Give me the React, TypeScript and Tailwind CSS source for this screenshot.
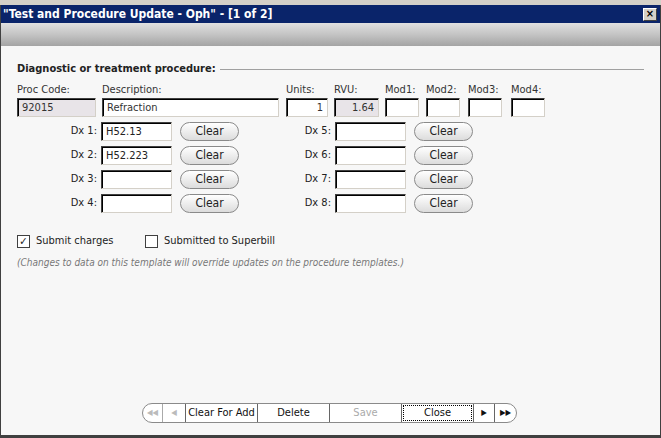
import React from 'react';

const font = { fontFamily: '"DejaVu Sans Condensed", "Liberation Sans", sans-serif' };

function Box({ w, value = '', gray = false, right = false }: { w: string; value?: string; gray?: boolean; right?: boolean }) {
  return (
    <div
      className={`${w} h-[19px] border border-t-[#404040] border-l-[#404040] border-b-[#d4d0c8] border-r-[#d4d0c8] shadow-[inset_1px_1px_0_#000] px-[4px] text-[11px] leading-[17px] ${gray ? 'bg-[#e8e4e8]' : 'bg-white'} ${right ? 'text-right' : ''}`}
    >
      {value}
    </div>
  );
}

function ClearBtn() {
  return (
    <button className="w-[59px] h-[19px] rounded-full border border-[#8a8a8a] bg-gradient-to-b from-white to-[#dcdcdc] text-[12px] leading-[17px] text-[#222]">
      Clear
    </button>
  );
}

function DxRow({ n, value }: { n: number; value?: string }) {
  return (
    <div className="flex items-center">
      <span className="w-[85px] text-right pr-[4px] text-[11px] text-[#222]">Dx {n}:</span>
      <Box w="w-[71px]" value={value} />
      <span className="w-[8px]" />
      <ClearBtn />
    </div>
  );
}

export default function App() {
  return (
    <div style={font} className="w-[661px] h-[438px] bg-[#d4d0c8] flex flex-col pt-[5px] overflow-hidden">
      <div className="flex-1 flex flex-col border-x border-[#404040] bg-[#f7f7f7]">
        <div className="h-[18px] bg-[#0a246a] flex items-center justify-between pl-[2px] pr-[3px]">
          <span className="text-white text-[12px] font-bold">"Test and Procedure Update - Oph" - [1 of 2]</span>
          <span className="w-[14px] h-[13px] bg-[#d4d0c8] border border-t-white border-l-white border-b-[#404040] border-r-[#404040] text-[11px] leading-[10px] text-center font-bold">×</span>
        </div>
        <div className="h-[23px] bg-gradient-to-b from-[#e0e0e0] via-[#c4c4c4] to-[#a4a4a4]" />
        <div className="flex-1 px-[16px] pt-[15px] text-[#222]">
          <div className="flex items-center gap-[4px]">
            <span className="text-[11px] font-bold">Diagnostic or treatment procedure:</span>
            <div className="flex-1 h-px bg-[#a0a0a0]" />
          </div>
          <div className="flex mt-[4px] text-[11px] text-[#333]">
            <div className="w-[85px]"><div>Proc Code:</div><Box w="w-[79px]" value="92015" gray /></div>
            <div className="w-[184px]"><div>Description:</div><Box w="w-[177px]" value="Refraction" /></div>
            <div className="w-[48px]"><div>Units:</div><Box w="w-[42px]" value="1" right /></div>
            <div className="w-[51px]"><div>RVU:</div><Box w="w-[45px]" value="1.64" gray right /></div>
            <div className="w-[41px]"><div>Mod1:</div><Box w="w-[34px]" /></div>
            <div className="w-[42px]"><div>Mod2:</div><Box w="w-[34px]" /></div>
            <div className="w-[43px]"><div>Mod3:</div><Box w="w-[34px]" /></div>
            <div><div>Mod4:</div><Box w="w-[34px]" /></div>
          </div>
          <div className="flex mt-[5px] -ml-[1px]">
            <div className="flex flex-col gap-[5px] w-[234px]">
              <DxRow n={1} value="H52.13" />
              <DxRow n={2} value="H52.223" />
              <DxRow n={3} />
              <DxRow n={4} />
            </div>
            <div className="flex flex-col gap-[5px]">
              <DxRow n={5} />
              <DxRow n={6} />
              <DxRow n={7} />
              <DxRow n={8} />
            </div>
          </div>
          <div className="flex items-center mt-[20px] text-[11px]">
            <span className="w-[13px] h-[13px] bg-white border border-[#404040] text-[11px] leading-[11px] text-center font-bold">✓</span>
            <span className="ml-[6px] w-[109px]">Submit charges</span>
            <span className="w-[13px] h-[13px] bg-white border border-[#404040]" />
            <span className="ml-[6px]">Submitted to Superbill</span>
          </div>
          <div className="mt-[5px] text-[10px] italic text-[#777]">(Changes to data on this template will override updates on the procedure templates.)</div>
        </div>
        <div className="flex justify-center pb-[12px]">
          <div className="flex h-[20px] border border-[#8a8a8a] rounded-full overflow-hidden bg-white text-[11px] text-[#111] mr-[143px] ml-[141px]">
            <div className="w-[20px] flex items-center justify-center text-[#bbb] text-[8px] border-r border-[#aaa]">◀◀</div>
            <div className="w-[23px] flex items-center justify-center text-[#bbb] text-[8px] border-r border-[#666]">◀</div>
            <div className="w-[72px] flex items-center justify-center border-r border-[#666]">Clear For Add</div>
            <div className="w-[72px] flex items-center justify-center border-r border-[#666]">Delete</div>
            <div className="w-[72px] flex items-center justify-center border-r border-[#666] text-[#aaa]">Save</div>
            <div className="w-[72px] flex items-center justify-center border-r border-[#666]"><span className="border border-dotted border-black px-[20px] leading-[14px]">Close</span></div>
            <div className="w-[21px] flex items-center justify-center text-[8px] border-r border-[#666]">▶</div>
            <div className="w-[21px] flex items-center justify-center text-[8px]">▶▶</div>
          </div>
        </div>
      </div>
      <div className="h-[3px] bg-[#404040]" />
    </div>
  );
}
